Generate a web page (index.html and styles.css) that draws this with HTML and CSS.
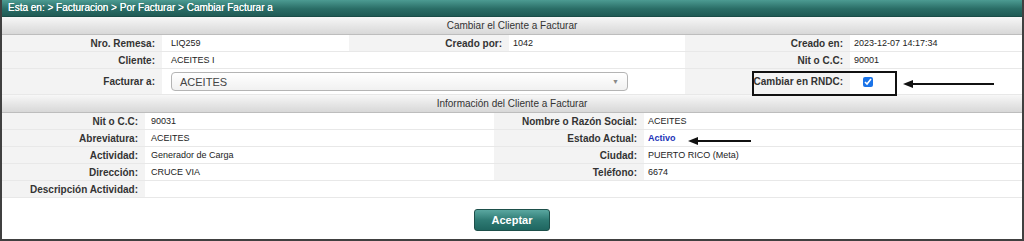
FILE: index.html
```html
<!DOCTYPE html>
<html lang="es">

<head>
    <meta charset="UTF-8">
    <title>Cambiar Facturar a</title>
    <link rel="stylesheet" href="styles.css">
</head>

<body>
    <div class="frame">
        <div class="topbar">Esta en: &gt; Facturacion &gt; Por Facturar &gt; Cambiar Facturar a</div>

        <!-- Cambiar cliente -->
        <table class="form form-6">
            <colgroup>
                <col style="width:160px">
                <col style="width:187px">
                <col style="width:160px">
                <col style="width:176px">
                <col style="width:165px">
                <col>
            </colgroup>
            <tr>
                <th colspan="6" class="section">Cambiar el Cliente a Facturar</th>
            </tr>
            <tr>
                <td class="lbl">Nro. Remesa:</td>
                <td class="val pad">LIQ259</td>
                <td class="lbl">Creado por:</td>
                <td class="val">1042</td>
                <td class="lbl">Creado en:</td>
                <td class="val">2023-12-07 14:17:34</td>
            </tr>
            <tr>
                <td class="lbl">Cliente:</td>
                <td class="val pad">ACEITES I</td>
                <td class="val"></td>
                <td class="val"></td>
                <td class="lbl">Nit o C.C:</td>
                <td class="val">90001</td>
            </tr>
            <tr class="tall">
                <td class="lbl">Facturar a:</td>
                <td colspan="3" class="val pad">
                    <div class="select">
                        <span>ACEITES</span>
                        <span class="caret">&#9660;</span>
                    </div>
                </td>
                <td class="lbl">Cambiar en RNDC:</td>
                <td class="val"><input type="checkbox" class="check" checked></td>
            </tr>
        </table>

        <!-- Informacion del cliente -->
        <table class="form form-4">
            <colgroup>
                <col style="width:143px">
                <col style="width:349px">
                <col style="width:150px">
                <col>
            </colgroup>
            <tr>
                <th colspan="4" class="section">Información del Cliente a Facturar</th>
            </tr>
            <tr>
                <td class="lbl">Nit o C.C:</td>
                <td class="val pad">90031</td>
                <td class="lbl">Nombre o Razón Social:</td>
                <td class="val">ACEITES</td>
            </tr>
            <tr>
                <td class="lbl">Abreviatura:</td>
                <td class="val pad">ACEITES</td>
                <td class="lbl">Estado Actual:</td>
                <td class="val"><span class="estado">Activo</span></td>
            </tr>
            <tr>
                <td class="lbl">Actividad:</td>
                <td class="val pad">Generador de Carga</td>
                <td class="lbl">Ciudad:</td>
                <td class="val">PUERTO RICO (Meta)</td>
            </tr>
            <tr>
                <td class="lbl">Dirección:</td>
                <td class="val pad">CRUCE VIA</td>
                <td class="lbl">Teléfono:</td>
                <td class="val">6674</td>
            </tr>
            <tr>
                <td class="lbl">Descripción Actividad:</td>
                <td colspan="3" class="val"></td>
            </tr>
        </table>

        <div class="actions">
            <button class="btn">Aceptar</button>
        </div>

        <!-- marcas de la captura -->
        <div class="mark-box"></div>
        <svg class="arrow arrow-1" width="92" height="10" viewBox="0 0 92 10">
            <line x1="8" y1="5" x2="91" y2="5" stroke="#111" stroke-width="2" />
            <polygon points="0,5 10,1 10,9" fill="#111" />
        </svg>
        <svg class="arrow arrow-2" width="64" height="10" viewBox="0 0 64 10">
            <line x1="8" y1="5" x2="63" y2="5" stroke="#111" stroke-width="2" />
            <polygon points="0,5 10,1 10,9" fill="#111" />
        </svg>
    </div>
</body>

</html>
```

FILE: styles.css
```css
body {
    margin: 0;
    padding: 0;
    font-family: "Liberation Sans", Arial, sans-serif;
    background: #fff;
}

.frame {
    position: relative;
    width: 1024px;
    height: 241px;
    box-sizing: border-box;
    border: 2px solid #404040;
    border-top: none;
    overflow: hidden;
}

.topbar {
    height: 16px;
    line-height: 16px;
    padding-left: 6px;
    font-size: 10px;
    color: #fff;
    text-shadow: 0 0 0.4px #fff;
    background: linear-gradient(#4c9b92, #2a6d66 55%, #1f5b55);
    border-bottom: 1px solid #1b4d48;
}

.form {
    width: 100%;
    border-collapse: collapse;
    table-layout: fixed;
}

.section {
    height: 17px;
    padding: 0;
    font-size: 10px;
    font-weight: normal;
    color: #333;
    text-align: center;
    background: linear-gradient(#f7f7f7, #e4e4e4 60%, #d8d8d8);
    border-bottom: 1px solid #bdbdbd;
}

.form td {
    height: 16px;
    padding: 0;
    border-bottom: 1px solid #e8e8e8;
    white-space: nowrap;
    overflow: hidden;
}

.lbl {
    text-align: right;
    padding-right: 7px !important;
    font-size: 10px;
    font-weight: bold;
    color: #333;
    background: #f3f3f3;
}

.val {
    font-size: 9px;
    color: #222;
    padding-left: 4px !important;
}

.val.pad {
    padding-left: 9px !important;
}

.form-4 .val.pad {
    padding-left: 6px !important;
}

.tall td {
    height: 25px;
}

.select {
    display: flex;
    justify-content: space-between;
    align-items: center;
    width: 457px;
    height: 19px;
    box-sizing: border-box;
    padding: 0 8px;
    border: 1px solid #b4b4b4;
    border-radius: 4px;
    background: linear-gradient(#ffffff, #f1f1f1);
    font-size: 11px;
    color: #444;
}

.caret {
    font-size: 7px;
    color: #888;
}

.check {
    width: 10px;
    height: 10px;
    margin: 0 0 0 9px;
    vertical-align: middle;
    accent-color: #1a73e8;
}

.estado {
    color: #2233b8;
    font-weight: bold;
}

.actions {
    display: flex;
    justify-content: center;
    padding-top: 11px;
}

.btn {
    width: 76px;
    height: 22px;
    padding: 0;
    font-family: "Liberation Sans", Arial, sans-serif;
    font-size: 11px;
    font-weight: bold;
    color: #fff;
    background: linear-gradient(#5aa7a0, #2f7b74 50%, #1f6660);
    border: 1px solid #1d4f4a;
    border-radius: 3px;
}

.mark-box {
    position: absolute;
    left: 750px;
    top: 71px;
    width: 141px;
    height: 21px;
    border: 2px solid #111;
}

.arrow {
    position: absolute;
}

.arrow-1 {
    left: 901px;
    top: 79px;
}

.arrow-2 {
    left: 686px;
    top: 136px;
}
```
